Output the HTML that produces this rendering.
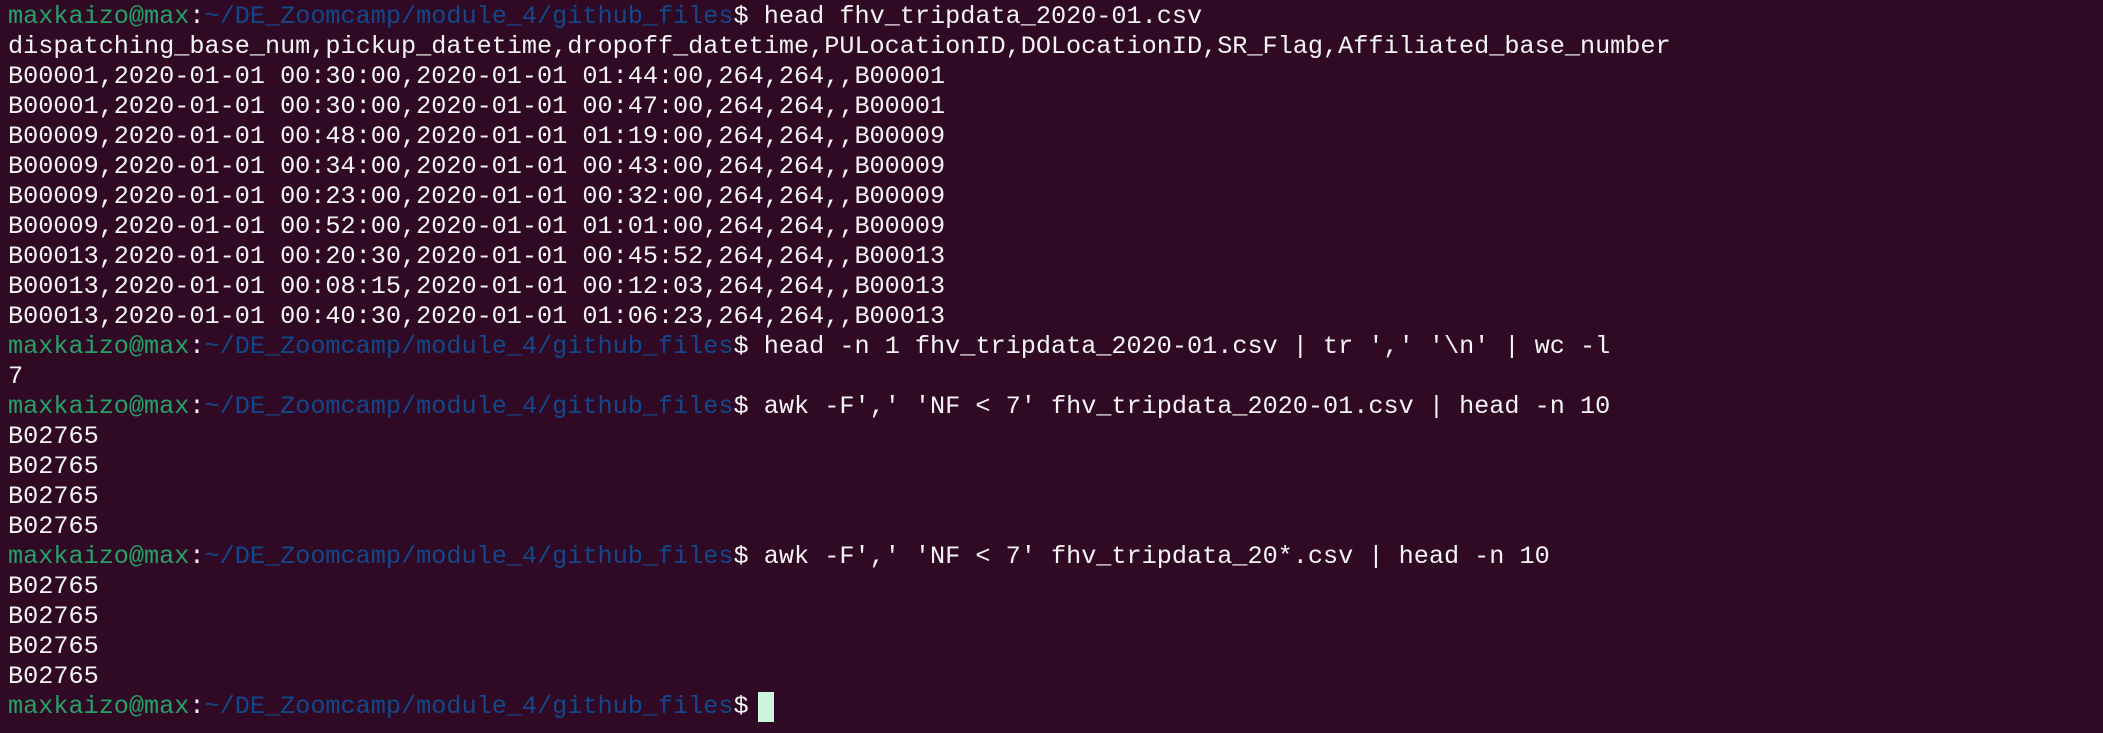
<!DOCTYPE html>
<html><head><meta charset="utf-8"><style>
html,body{margin:0;padding:0;background:#300a24;width:2103px;height:733px;overflow:hidden}
pre{margin:0;position:absolute;left:8px;top:2px;font-family:"Liberation Mono",monospace;font-size:25.2px;line-height:30px;color:#f5f5f5;white-space:pre}
.g{color:#26a269}.b{color:#12488b}
.cur{display:inline-block;width:16px;height:30px;background:#cdf5dc;vertical-align:top;margin-left:-6px}
</style></head><body><pre><span class="g">maxkaizo@max</span>:<span class="b">~/DE_Zoomcamp/module_4/github_files</span>$ head fhv_tripdata_2020-01.csv
dispatching_base_num,pickup_datetime,dropoff_datetime,PULocationID,DOLocationID,SR_Flag,Affiliated_base_number
B00001,2020-01-01 00:30:00,2020-01-01 01:44:00,264,264,,B00001
B00001,2020-01-01 00:30:00,2020-01-01 00:47:00,264,264,,B00001
B00009,2020-01-01 00:48:00,2020-01-01 01:19:00,264,264,,B00009
B00009,2020-01-01 00:34:00,2020-01-01 00:43:00,264,264,,B00009
B00009,2020-01-01 00:23:00,2020-01-01 00:32:00,264,264,,B00009
B00009,2020-01-01 00:52:00,2020-01-01 01:01:00,264,264,,B00009
B00013,2020-01-01 00:20:30,2020-01-01 00:45:52,264,264,,B00013
B00013,2020-01-01 00:08:15,2020-01-01 00:12:03,264,264,,B00013
B00013,2020-01-01 00:40:30,2020-01-01 01:06:23,264,264,,B00013
<span class="g">maxkaizo@max</span>:<span class="b">~/DE_Zoomcamp/module_4/github_files</span>$ head -n 1 fhv_tripdata_2020-01.csv | tr ',' '\n' | wc -l
7
<span class="g">maxkaizo@max</span>:<span class="b">~/DE_Zoomcamp/module_4/github_files</span>$ awk -F',' 'NF &lt; 7' fhv_tripdata_2020-01.csv | head -n 10
B02765
B02765
B02765
B02765
<span class="g">maxkaizo@max</span>:<span class="b">~/DE_Zoomcamp/module_4/github_files</span>$ awk -F',' 'NF &lt; 7' fhv_tripdata_20*.csv | head -n 10
B02765
B02765
B02765
B02765
<span class="g">maxkaizo@max</span>:<span class="b">~/DE_Zoomcamp/module_4/github_files</span>$ <span class="cur"></span></pre></body></html>
